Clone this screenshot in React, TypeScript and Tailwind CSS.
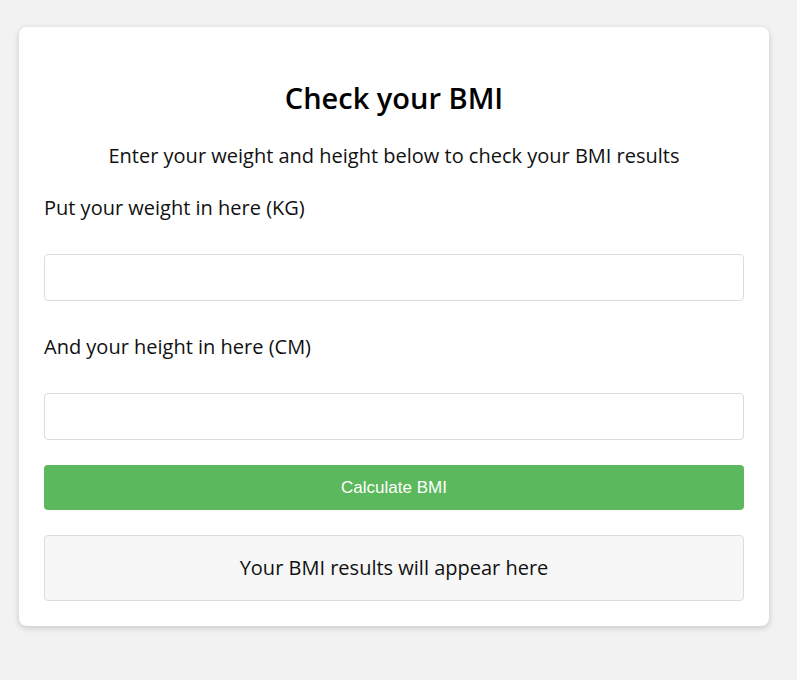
export default function App() {
  return (
    <div className="min-h-[680px] bg-[#f2f2f2] pt-[27px] pl-[19px]" style={{ fontFamily: '"Open Sans", sans-serif' }}>
      <div className="w-[750px] rounded-[8px] bg-white px-[25px] pt-[25px] pb-[25px] shadow-[0_2px_6px_rgba(0,0,0,0.18)] text-[#111]">
        <h1 className="mt-[25px] text-center text-[29px] font-semibold leading-[42px] text-black">Check your BMI</h1>
        <p className="mt-[23px] text-center text-[20px] leading-[28px]">Enter your weight and height below to check your BMI results</p>
        <label className="mt-[24px] block text-[20px] leading-[28px]">Put your weight in here (KG)</label>
        <input type="text" className="mt-[32px] block h-[47px] w-full rounded-[4px] border border-[#dcdcdc] bg-white outline-none" />
        <label className="mt-[32px] block text-[20px] leading-[28px]">And your height in here (CM)</label>
        <input type="text" className="mt-[32px] block h-[47px] w-full rounded-[4px] border border-[#dcdcdc] bg-white outline-none" />
        <button className="mt-[25px] block h-[45px] w-full rounded-[4px] bg-[#5cb85c] text-[17px] text-white" style={{ fontFamily: '"Liberation Sans", Arial, sans-serif' }}>Calculate BMI</button>
        <div className="mt-[25px] flex h-[66px] items-center justify-center rounded-[4px] border border-[#dcdcdc] bg-[#f7f7f7] text-[20px]">Your BMI results will appear here</div>
      </div>
    </div>
  );
}
